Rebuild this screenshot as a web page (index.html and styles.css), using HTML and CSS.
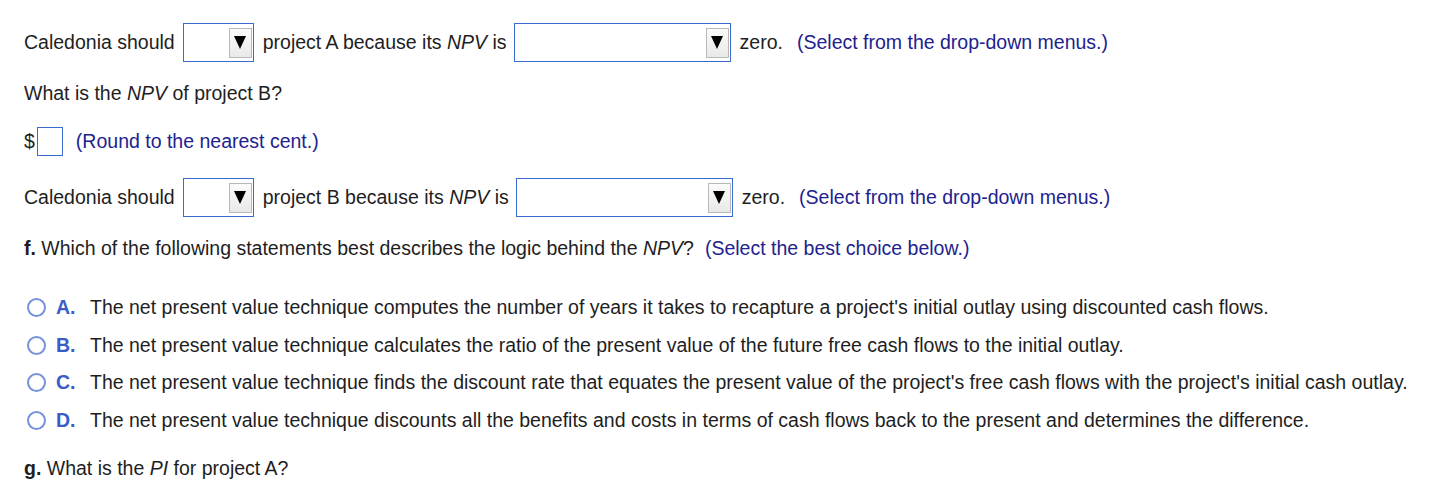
FILE: index.html
```html
<!DOCTYPE html>
<html>
<head>
<meta charset="utf-8">
<link rel="stylesheet" href="styles.css">
</head>
<body>
<div class="page">
  <div class="row row-dd">
    <span>Caledonia should</span>
    <span class="dd dd-s"><span class="dd-btn"><span class="tri"></span></span></span>
    <span>project A because its <i>NPV</i> is</span>
    <span class="dd dd-l"><span class="dd-btn"><span class="tri"></span></span></span>
    <span>zero.</span>
    <span class="hint">(Select from the drop-down menus.)</span>
  </div>

  <div class="line q-npv">What is the <i>NPV</i> of project B?</div>

  <div class="row row-dollar">
    <span>$</span>
    <span class="num-input"></span>
    <span class="hint hint-round">(Round to the nearest cent.)</span>
  </div>

  <div class="row row-dd row-b">
    <span>Caledonia should</span>
    <span class="dd dd-s"><span class="dd-btn"><span class="tri"></span></span></span>
    <span>project B because its <i>NPV</i> is</span>
    <span class="dd dd-l"><span class="dd-btn"><span class="tri"></span></span></span>
    <span>zero.</span>
    <span class="hint">(Select from the drop-down menus.)</span>
  </div>

  <div class="line q-f"><b>f.</b> Which of the following statements best describes the logic behind the <i>NPV</i>?<span class="hint hint-f">(Select the best choice below.)</span></div>

  <div class="options">
    <div class="opt"><span class="radio"></span><span class="letter">A.</span><span>The net present value technique computes the number of years it takes to recapture a project's initial outlay using discounted cash flows.</span></div>
    <div class="opt"><span class="radio"></span><span class="letter">B.</span><span>The net present value technique calculates the ratio of the present value of the future free cash flows to the initial outlay.</span></div>
    <div class="opt"><span class="radio"></span><span class="letter">C.</span><span>The net present value technique finds the discount rate that equates the present value of the project's free cash flows with the project's initial cash outlay.</span></div>
    <div class="opt"><span class="radio"></span><span class="letter">D.</span><span>The net present value technique discounts all the benefits and costs in terms of cash flows back to the present and determines the difference.</span></div>
  </div>

  <div class="line q-g"><b>g.</b> What is the <i>PI</i> for project A?</div>
</div>
</body>
</html>
```

FILE: styles.css
```css
html, body {
  margin: 0;
  padding: 0;
  background: #ffffff;
}

body {
  font-family: "Liberation Sans", Arial, sans-serif;
  font-size: 19.5px;
  color: #1e1e1e;
}

.page {
  padding: 23px 0 0 24px;
}

.row {
  display: flex;
  align-items: center;
  white-space: nowrap;
}

.row-dd {
  height: 39px;
}

.row-b {
  margin-top: 22px;
}

.line {
  line-height: 22px;
  height: 22px;
  white-space: nowrap;
}

.q-npv {
  margin-top: 20px;
}

.row-dollar {
  margin-top: 23px;
  height: 29px;
}

.q-f {
  margin-top: 20px;
}

.q-g {
  margin-top: 18px;
}

.hint {
  color: #22228f;
  margin-left: 14px;
}

.hint-round {
  margin-left: 13px;
}

.hint-f {
  margin-left: 11px;
}

.dd {
  box-sizing: border-box;
  height: 39px;
  border: 1px solid #3a6bd1;
  background: #ffffff;
  display: flex;
  align-items: center;
  justify-content: flex-end;
  padding-right: 1px;
  margin-left: 9px;
  margin-right: 9px;
}

.dd-s {
  width: 71px;
  margin-left: 8px;
}

.dd-l {
  width: 217px;
  margin-left: 7px;
}

.dd-btn {
  box-sizing: border-box;
  width: 23px;
  height: 30px;
  border: 1px solid #b8b8b8;
  background: linear-gradient(#fbfbfb, #e9e9e9);
  display: flex;
  align-items: center;
  justify-content: center;
}

.tri {
  width: 0;
  height: 0;
  border-left: 6.5px solid transparent;
  border-right: 6.5px solid transparent;
  border-top: 13px solid #000000;
}

.num-input {
  box-sizing: border-box;
  width: 26px;
  height: 29px;
  border: 1px solid #3a6bd1;
  margin-left: 2px;
}

.options {
  margin-top: 30px;
}

.opt {
  height: 37.5px;
  display: flex;
  align-items: center;
  white-space: nowrap;
}

.radio {
  box-sizing: border-box;
  width: 19px;
  height: 19px;
  border: 2px solid #7592d9;
  border-radius: 50%;
  margin-left: 3px;
  margin-right: 10px;
  flex: none;
}

.letter {
  width: 34px;
  font-weight: bold;
  color: #3b5cc6;
  flex: none;
}
```
